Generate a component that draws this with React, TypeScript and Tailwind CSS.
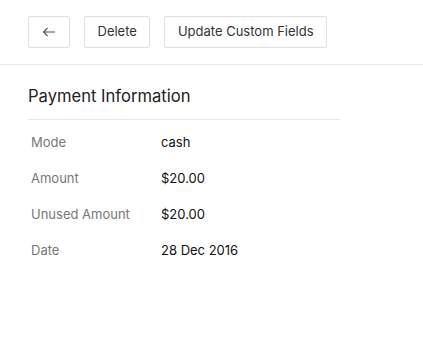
import React from "react";

const rows = [
  ["Mode", "cash"],
  ["Amount", "$20.00"],
  ["Unused Amount", "$20.00"],
  ["Date", "28 Dec 2016"],
];

export default function App() {
  return (
    <div className="w-[423px] h-[353px] bg-white text-[#222]" style={{ fontFamily: "Inter, 'Liberation Sans', sans-serif" }}>
      <div className="flex items-center gap-[14px] px-[28px] pt-[16px] pb-[16px] border-b border-[#e8e8e8]">
        <button className="w-[42px] h-[32px] border border-[#e0e0e0] rounded-[2px] flex items-center justify-center text-[#444]">
          <svg width="14" height="10" viewBox="0 0 14 10" fill="none" stroke="#555" strokeWidth="1.1">
            <path d="M13 5H1.5M5.5 1L1.5 5L5.5 9" />
          </svg>
        </button>
        <button className="h-[32px] px-[12.5px] border border-[#e0e0e0] rounded-[2px] text-[13px] text-[#333]">Delete</button>
        <button className="h-[32px] px-[12.5px] border border-[#e0e0e0] rounded-[2px] text-[13px] text-[#333]">Update Custom Fields</button>
      </div>
      <div className="px-[28px] pt-[19px]">
        <div className="w-[312px] border-b border-[#e8e8e8] pb-[11px] text-[16.6px] leading-[24px] text-[#222]">Payment Information</div>
        <div className="pt-[14px] pl-[3px]">
          {rows.map(([k, v]) => (
            <div key={k} className="flex h-[36px] items-start text-[13px] leading-[16px]">
              <div className="w-[130px] text-[#777]">{k}</div>
              <div className="text-[#111]">{v}</div>
            </div>
          ))}
        </div>
      </div>
    </div>
  );
}
